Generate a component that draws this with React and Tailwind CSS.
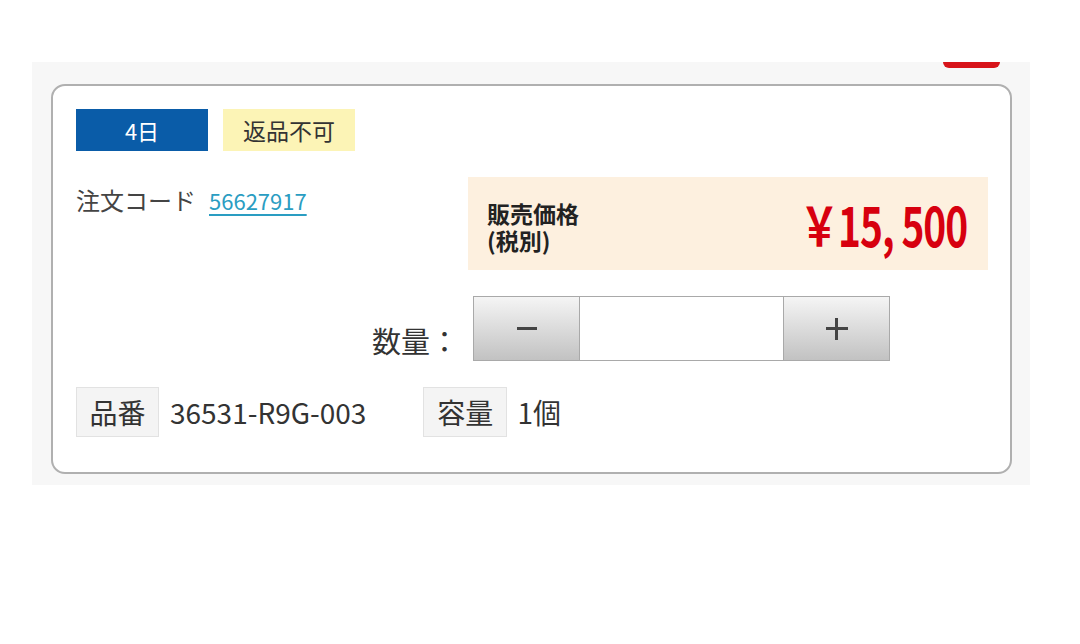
const jp = { fontFamily: '"Noto Sans CJK JP", "Noto Sans", sans-serif' };

function StepButton({ children }) {
  return (
    <button
      type="button"
      className="flex h-[65px] w-[107px] items-center justify-center border border-[#a9a9a9] bg-gradient-to-b from-[#f5f5f5] to-[#c2c2c2] text-[#444]"
    >
      {children}
    </button>
  );
}

export default function App() {
  return (
    <div className="min-h-[644px] bg-white pt-[62px] pl-[32px]" style={jp}>
      <div className="relative h-[423px] w-[998px] bg-[#f7f7f7] pt-[22px] pl-[19px]">
        <div className="absolute right-[30px] top-0 h-[6px] w-[57px] rounded-b-[6px] bg-[#d7141a]" />

        <div className="h-[390px] w-[961px] rounded-[14px] border-2 border-[#b0b0b0] bg-white pl-[23px] pr-[22px] pt-[23px]">
          <div className="flex gap-[15px]">
            <span className="flex h-[42px] w-[132px] items-center justify-center bg-[#0a5ca8] text-[22px] text-white">
              4日
            </span>
            <span className="flex h-[42px] w-[132px] items-center justify-center bg-[#fcf4b6] text-[23px] text-[#333]">
              返品不可
            </span>
          </div>

          <div className="mt-[26px] flex justify-between">
            <p className="pt-[6px] text-[24px] leading-[34px] text-[#444]">
              注文コード
              <a href="#" className="ml-[13px] text-[22px] text-[#2a9dc2] underline underline-offset-[4px]">
                56627917
              </a>
            </p>
            <div className="flex h-[93px] w-[520px] items-center justify-between bg-[#fdf0df] pl-[19px] pr-[21px]">
              <p className="pt-[6px] text-[23px] font-bold leading-[27px] text-[#222]">
                販売価格
                <br />
                (税別)
              </p>
              <p className="origin-right scale-x-[0.72] text-[54px] font-bold leading-none tracking-tight text-[#d7000f]">
                ￥15, 500
              </p>
            </div>
          </div>

          <div className="mt-[26px] flex items-center justify-end pr-[98px]">
            <span className="mr-[14px] pt-[24px] text-[29px] leading-none text-[#333]">数量：</span>
            <StepButton>
              <span className="block h-[3px] w-[20px] bg-[#444]" />
            </StepButton>
            <input
              type="text"
              className="h-[65px] w-[203px] border-y border-[#a9a9a9] bg-white outline-none"
            />
            <StepButton>
              <span className="relative block h-[22px] w-[22px]">
                <span className="absolute left-0 top-[9.5px] h-[3px] w-[22px] bg-[#444]" />
                <span className="absolute left-[9.5px] top-0 h-[22px] w-[3px] bg-[#444]" />
              </span>
            </StepButton>
          </div>

          <div className="mt-[26px] flex items-center text-[28px] text-[#333]">
            <span className="flex h-[50px] w-[83px] items-center justify-center border border-[#e2e2e2] bg-[#f4f4f4]">
              品番
            </span>
            <span className="ml-[11px]">36531-R9G-003</span>
            <span className="ml-[57px] flex h-[50px] w-[84px] items-center justify-center border border-[#e2e2e2] bg-[#f4f4f4]">
              容量
            </span>
            <span className="ml-[10px]">1個</span>
          </div>
        </div>
      </div>
    </div>
  );
}
